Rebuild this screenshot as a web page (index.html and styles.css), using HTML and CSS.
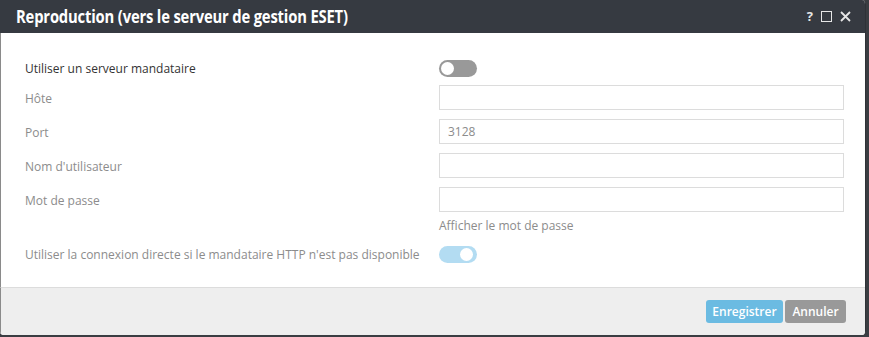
FILE: index.html
```html
<!DOCTYPE html>
<html lang="fr">
<head>
  <meta charset="UTF-8">
  <title>Reproduction</title>
  <link rel="stylesheet" href="styles.css">
</head>
<body>
  <div class="dialog">
    <header class="dialog-header">
      <h1><span>Reproduction (vers le serveur de gestion ESET)</span></h1>
      <div class="header-tools">
        <span class="tool-help">?</span>
        <span class="tool-max"></span>
        <svg class="tool-close" width="11" height="11" viewBox="0 0 11 11"><path d="M1 1 L10 10 M10 1 L1 10" stroke="#e6e6e6" stroke-width="1.8"/></svg>
      </div>
    </header>

    <section class="dialog-body">
      <div class="row first">
        <label class="main">Utiliser un serveur mandataire</label>
        <div class="field"><span class="toggle off"></span></div>
      </div>
      <div class="row">
        <label>Hôte</label>
        <div class="field"><input type="text" value=""></div>
      </div>
      <div class="row">
        <label>Port</label>
        <div class="field"><input type="text" value="3128"></div>
      </div>
      <div class="row">
        <label>Nom d'utilisateur</label>
        <div class="field"><input type="text" value=""></div>
      </div>
      <div class="row">
        <label>Mot de passe</label>
        <div class="field">
          <input type="password" value="">
          <div class="show-pass">Afficher le mot de passe</div>
        </div>
      </div>
      <div class="row last">
        <label>Utiliser la connexion directe si le mandataire HTTP n'est pas disponible</label>
        <div class="field"><span class="toggle on"></span></div>
      </div>
    </section>

    <footer class="dialog-footer">
      <button class="btn btn-save">Enregistrer</button>
      <button class="btn btn-cancel">Annuler</button>
    </footer>
  </div>
</body>
</html>
```
FILE: styles.css
```css
body {
  margin: 0;
  background: #3a3d42;
  font-family: "Open Sans", sans-serif;
  font-size: 12px;
  color: #8c8c8c;
}
.dialog {
  width: 865px;
  height: 335px;
  background: #fff;
  border-right: 1px solid #2f3237;
  border-radius: 0 4px 4px 4px;
  overflow: hidden;
  display: flex;
  flex-direction: column;
}
.dialog-header {
  height: 33px;
  background: #363a41;
  display: flex;
  align-items: center;
  justify-content: space-between;
  padding: 0 14px 0 16px;
  flex-shrink: 0;
}
.dialog-header h1 {
  margin: 0;
  font-size: 17px;
  font-weight: 700;
  color: #fff;
  white-space: nowrap;
}
.dialog-header h1 span {
  display: inline-block;
  transform: scaleX(0.87);
  transform-origin: left center;
  letter-spacing: -0.2px;
}
.header-tools {
  display: flex;
  align-items: center;
  gap: 8px;
  color: #e6e6e6;
}
.tool-help {
  font-weight: 700;
  font-size: 13px;
  line-height: 1;
}
.tool-max {
  width: 9px;
  height: 9px;
  border: 1.5px solid #e6e6e6;
}
.dialog-body {
  flex: 1;
  padding: 27px 21px 0 24px;
  border-left: 1px solid #8a8a8a;
}
.row {
  display: flex;
  align-items: flex-start;
  min-height: 34px;
}
.row label {
  flex-shrink: 0;
  width: 414px;
  line-height: 25px;
  padding-top: 1px;
}
.row.first {
  min-height: 25px;
}
.row.first label {
  color: #333;
  line-height: 18px;
  padding-top: 0;
}
.field {
  flex: 1;
}
.field input {
  box-sizing: border-box;
  width: 405px;
  height: 25px;
  border: 1px solid #dcdcdc;
  padding: 0 8px;
  font-family: "Open Sans", sans-serif;
  font-size: 12px;
  color: #8c8c8c;
  outline: none;
}
.show-pass {
  margin-top: 5px;
  margin-bottom: 12px;
}
.row.last label {
  line-height: 18px;
  padding-top: 0;
}
.toggle {
  display: block;
  position: relative;
  width: 38px;
  height: 17px;
  border-radius: 9px;
  background: #999;
}
.toggle::after {
  content: "";
  position: absolute;
  top: 2px;
  width: 13px;
  height: 13px;
  border-radius: 50%;
  background: #fff;
}
.toggle.off::after {
  left: 2px;
}
.toggle.on {
  background: #b3dcf2;
}
.toggle.on::after {
  right: 4px;
}
.dialog-footer {
  height: 47px;
  flex-shrink: 0;
  background: #eeeeee;
  border-top: 1px solid #dcdcdc;
  border-left: 1px solid #8a8a8a;
  display: flex;
  justify-content: flex-end;
  align-items: center;
  gap: 2px;
  padding-right: 19px;
}
.btn {
  height: 23px;
  border: none;
  border-radius: 3px;
  color: #fff;
  font-family: "Open Sans", sans-serif;
  font-size: 12px;
  font-weight: 600;
  padding: 0;
}
.btn-save {
  width: 77px;
  background: #6bbbe2;
}
.btn-cancel {
  width: 61px;
  background: #999;
}
```
